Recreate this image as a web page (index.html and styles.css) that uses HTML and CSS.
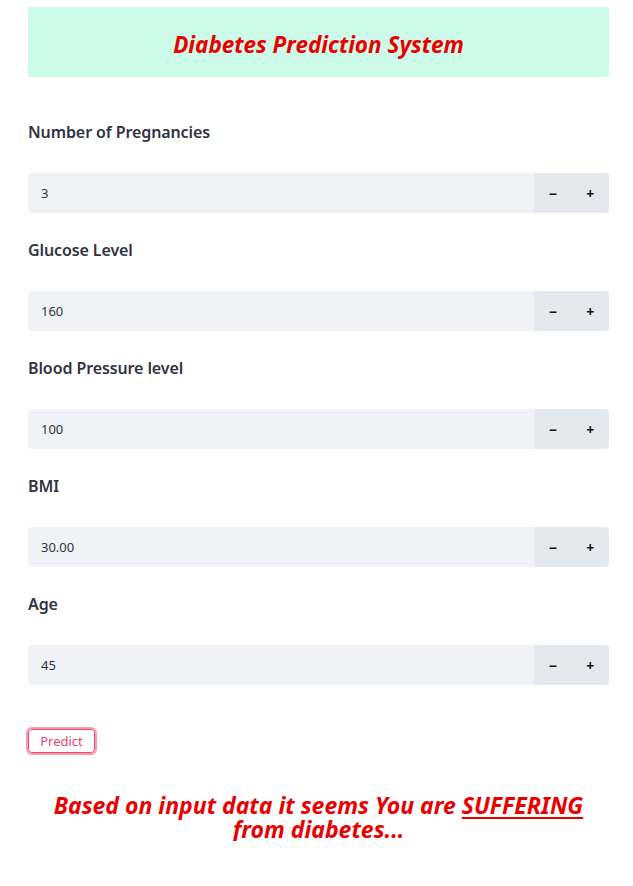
FILE: index.html
```html
<!DOCTYPE html>
<html>
<head>
<meta charset="utf-8">
<link rel="stylesheet" href="styles.css">
</head>
<body>
<main class="page">
  <header class="banner"><h1 class="banner-title">Diabetes Prediction System</h1></header>

  <div class="field">
    <label class="field-label">Number of Pregnancies</label>
    <div class="num-input"><span class="num-value">3</span><div class="steppers"><span class="step">&minus;</span><span class="step">+</span></div></div>
  </div>
  <div class="field">
    <label class="field-label">Glucose Level</label>
    <div class="num-input"><span class="num-value">160</span><div class="steppers"><span class="step">&minus;</span><span class="step">+</span></div></div>
  </div>
  <div class="field">
    <label class="field-label">Blood Pressure level</label>
    <div class="num-input"><span class="num-value">100</span><div class="steppers"><span class="step">&minus;</span><span class="step">+</span></div></div>
  </div>
  <div class="field">
    <label class="field-label">BMI</label>
    <div class="num-input"><span class="num-value">30.00</span><div class="steppers"><span class="step">&minus;</span><span class="step">+</span></div></div>
  </div>
  <div class="field">
    <label class="field-label">Age</label>
    <div class="num-input"><span class="num-value">45</span><div class="steppers"><span class="step">&minus;</span><span class="step">+</span></div></div>
  </div>

  <div class="actions"><button class="predict">Predict</button></div>

  <div class="result">
    <span class="result-line">Based on input data it seems You are <u>SUFFERING</u></span>
    <span class="result-line">from diabetes...</span>
  </div>
</main>
</body>
</html>
```

FILE: styles.css
```css
html, body { margin: 0; padding: 0; background: #fff; }
body { font-family: "Noto Sans", "DejaVu Sans", sans-serif; color: #31333f; }
.page { width: 581px; margin-left: 28px; padding-top: 7px; }
.banner { height: 70px; box-sizing: border-box; padding-top: 6px; background: #ccfce9; display: flex; align-items: center; justify-content: center; }
.banner-title { margin: 0; font-size: 22.5px; font-weight: 700; font-style: italic; color: #e80000; line-height: 28px; }
.field { display: flex; flex-direction: column; }
.field-label { display: block; font-size: 16px; font-weight: 600; line-height: 24px; margin-top: 25px; margin-bottom: 29px; letter-spacing: -0.1px; }
.field:first-of-type .field-label { margin-top: 43px; }
.num-input { height: 40px; background: #f0f2f6; border-radius: 4px; display: flex; align-items: center; overflow: hidden; }
.num-value { flex: 1; padding-left: 13px; font-size: 13px; }
.steppers { display: flex; height: 100%; background: #e5e9ef; }
.step { width: 37.5px; display: flex; align-items: center; justify-content: center; font-size: 14px; font-weight: 700; color: #111; }
.actions { margin-top: 44px; }
.predict { font-family: inherit; font-size: 13px; color: #e2486a; background: #fff; border: 1px solid #ee4a6c; border-radius: 4px; height: 24px; width: 67px; padding: 0; outline: 2px solid #f69bb1; outline-offset: 0; }
.result { margin-top: 40px; display: flex; flex-direction: column; align-items: center; text-align: center; font-size: 23px; font-weight: 700; font-style: italic; color: #e80000; }
.result-line { display: block; line-height: 24px; height: 24px; }
.result u { text-underline-offset: 3px; }
```
